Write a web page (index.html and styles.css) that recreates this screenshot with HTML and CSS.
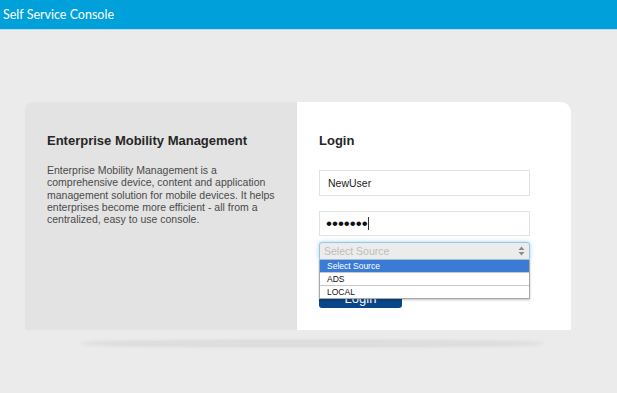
FILE: index.html
```html
<!DOCTYPE html>
<html>
<head>
<meta charset="utf-8">
<link rel="stylesheet" href="styles.css">
</head>
<body>
<header class="topbar">Self Service Console</header>
<main class="stage">
  <div class="card">
    <section class="info">
      <h2 class="info-title">Enterprise Mobility Management</h2>
      <p class="info-text">Enterprise Mobility Management is a comprehensive device, content and application management solution for mobile devices. It helps enterprises become more efficient - all from a centralized, easy to use console.</p>
    </section>
    <section class="login">
      <h2 class="login-title">Login</h2>
      <div class="field">NewUser</div>
      <div class="field pass"><span class="dots">&#8226;&#8226;&#8226;&#8226;&#8226;&#8226;&#8226;</span><span class="caret"></span></div>
      <div class="select-wrap">
        <div class="select">
          <span class="select-text">Select Source</span>
          <svg class="arrows" width="7" height="10" viewBox="0 0 7 10"><path d="M0.5 4 L3.5 0.5 L6.5 4 Z M0.5 6 L3.5 9.5 L6.5 6 Z" fill="#8a8a8a"/></svg>
        </div>
        <ul class="options">
          <li class="opt active">Select Source</li>
          <li class="opt">ADS</li>
          <li class="opt">LOCAL</li>
        </ul>
        <button class="btn">Login</button>
      </div>
    </section>
  </div>
  <div class="floor"></div>
</main>
</body>
</html>
```
FILE: styles.css
```css
html, body {
  margin: 0;
  padding: 0;
}
body {
  width: 617px;
  height: 393px;
  overflow: hidden;
  background: #ebebeb;
  font-family: "Liberation Sans", Arial, sans-serif;
}
.topbar {
  height: 30px;
  box-sizing: border-box;
  background: #00a1db;
  border-bottom: 1px solid #b9dcea;
  color: #ffffff;
  font-family: Lato, "Liberation Sans", sans-serif;
  font-size: 12.5px;
  line-height: 29px;
  padding-left: 3px;
}
.stage {
  padding-top: 72px;
  padding-left: 25px;
}
.card {
  display: flex;
  width: 546px;
  height: 228px;
}
.info {
  width: 272px;
  background: #e3e3e3;
  border-top-left-radius: 8px;
  box-sizing: border-box;
  padding: 31px 22px 0 22px;
}
.info-title {
  margin: 0;
  font-size: 13px;
  font-weight: bold;
  color: #262626;
  line-height: 16px;
}
.info-text {
  margin: 15px 0 0 0;
  font-size: 10.5px;
  line-height: 12.3px;
  color: #4a4a4a;
  width: 230px;
}
.login {
  width: 274px;
  background: #ffffff;
  border-top-right-radius: 10px;
  box-sizing: border-box;
  padding: 31px 41px 0 22px;
}
.login-title {
  margin: 0;
  font-size: 13px;
  font-weight: bold;
  color: #262626;
  line-height: 16px;
}
.field {
  margin-top: 21px;
  height: 26px;
  box-sizing: border-box;
  border: 1px solid #e2e2e2;
  font-size: 10.5px;
  color: #222;
  line-height: 24px;
  padding-left: 8px;
  display: flex;
  align-items: center;
}
.pass {
  margin-top: 15px;
  height: 25px;
  padding-left: 6px;
}
.dots {
  font-size: 17px;
  line-height: 20px;
  color: #111;
}
.caret {
  display: inline-block;
  width: 1px;
  height: 13px;
  background: #333;
  margin-left: 0;
}
.select-wrap {
  position: relative;
  margin-top: 6px;
}
.select {
  height: 18px;
  box-sizing: border-box;
  border: 1px solid #9fc6d8;
  border-radius: 3px 3px 0 0;
  background: #ececec;
  box-shadow: 0 0 4px rgba(90, 180, 230, 0.6);
  display: flex;
  align-items: center;
  justify-content: space-between;
  padding: 0 4px 0 4px;
}
.select-text {
  font-size: 10.5px;
  color: #bdbdbd;
}
.arrows {
  display: block;
}
.options {
  position: absolute;
  left: 0;
  right: 0;
  top: 18px;
  margin: 0;
  padding: 0;
  list-style: none;
  background: #fff;
  border: 1px solid #a8a8a8;
  border-top: none;
  box-shadow: 0 1px 2px rgba(0,0,0,0.25);
  z-index: 2;
}
.opt {
  height: 12px;
  line-height: 12px;
  font-size: 8.5px;
  color: #111;
  padding-left: 7px;
  border-top: 1px solid #c8c8c8;
}
.opt:first-child {
  border-top: none;
}
.opt.active {
  background: #3a7bd5;
  color: #fff;
}
.btn {
  display: block;
  margin-top: 29px;
  width: 83px;
  height: 19px;
  border: none;
  border-radius: 3px;
  background: #084689;
  color: #fff;
  font-family: "Liberation Sans", Arial, sans-serif;
  font-size: 13px;
  line-height: 12px;
  padding: 0;
}
.floor {
  margin: 12px 0 0 55px;
  width: 465px;
  height: 3px;
  border-radius: 50%;
  background: rgba(0,0,0,0.05);
  box-shadow: 0 0 4px 1px rgba(0,0,0,0.12);
}
```
